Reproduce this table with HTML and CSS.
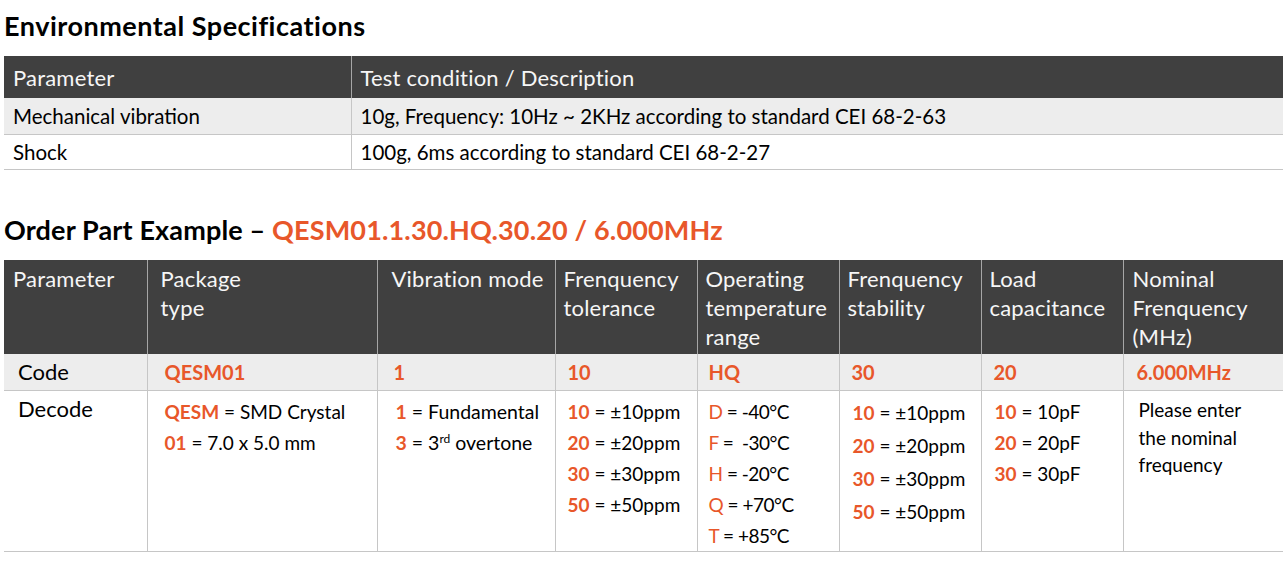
FILE: index.html
```html
<!DOCTYPE html>
<html>
<head>
<meta charset="utf-8">
<link rel="stylesheet" href="styles.css">
</head>
<body>
<div class="page">
  <h2 class="title t1">Environmental Specifications</h2>
  <table class="spec env">
    <colgroup><col class="c-env1"><col></colgroup>
    <tr class="head h-env"><th>Parameter</th><th>Test condition / Description</th></tr>
    <tr class="grey r-env1"><td>Mechanical vibration</td><td>10g, Frequency: 10Hz ~ 2KHz according to standard CEI 68-2-63</td></tr>
    <tr class="r-env2"><td>Shock</td><td>100g, 6ms according to standard CEI 68-2-27</td></tr>
  </table>

  <h2 class="title t2">Order Part Example – <span class="or">QESM01.1.30.HQ.30.20 / 6.000MHz</span></h2>
  <table class="spec order">
    <colgroup>
      <col class="w1"><col class="w2"><col class="w3"><col class="w4"><col class="w4"><col class="w4"><col class="w4"><col>
    </colgroup>
    <tr class="head h-ord">
      <th class="p9">Parameter</th>
      <th class="p13">Package<br>type</th>
      <th class="p14">Vibration mode</th>
      <th class="p8">Frenquency<br>tolerance</th>
      <th class="p8">Operating<br>temperature<br>range</th>
      <th class="p8">Frenquency<br>stability</th>
      <th class="p8">Load<br>capacitance</th>
      <th class="p9">Nominal<br>Frenquency<br>(MHz)</th>
    </tr>
    <tr class="grey code">
      <td class="lbl p14">Code</td>
      <td class="or b p17">QESM01</td>
      <td class="or b p16">1</td>
      <td class="or b p12">10</td>
      <td class="or b p11">HQ</td>
      <td class="or b p12">30</td>
      <td class="or b p12">20</td>
      <td class="or b p13">6.000MHz</td>
    </tr>
    <tr class="decode">
      <td class="lbl p14">Decode</td>
      <td class="p17"><div class="ln"><b class="or">QESM</b> = SMD Crystal</div><div class="ln"><b class="or">01</b> = 7.0 x 5.0 mm</div></td>
      <td class="p18 mid"><div class="ln"><b class="or">1</b> = Fundamental</div><div class="ln"><b class="or">3</b> = 3<sup>rd</sup> overtone</div></td>
      <td class="p12"><div class="ln"><b class="or">10</b> = ±10ppm</div><div class="ln"><b class="or">20</b> = ±20ppm</div><div class="ln"><b class="or">30</b> = ±30ppm</div><div class="ln"><b class="or">50</b> = ±50ppm</div></td>
      <td class="p11 nar"><div class="ln"><span class="or">D</span> = -40°C</div><div class="ln"><span class="or">F</span> = &nbsp;-30°C</div><div class="ln"><span class="or">H</span> = -20°C</div><div class="ln"><span class="or">Q</span> = +70°C</div><div class="ln"><span class="or">T</span> = +85°C</div></td>
      <td class="p13 wide"><div class="ln"><b class="or">10</b> = ±10ppm</div><div class="ln"><b class="or">20</b> = ±20ppm</div><div class="ln"><b class="or">30</b> = ±30ppm</div><div class="ln"><b class="or">50</b> = ±50ppm</div></td>
      <td class="p13"><div class="ln"><b class="or">10</b> = 10pF</div><div class="ln"><b class="or">20</b> = 20pF</div><div class="ln"><b class="or">30</b> = 30pF</div></td>
      <td class="p15 small"><div class="ln">Please enter</div><div class="ln">the nominal</div><div class="ln">frequency</div></td>
    </tr>
  </table>
</div>
</body>
</html>
```
FILE: styles.css
```css
html, body {
  margin: 0;
  padding: 0;
  background: #ffffff;
}
body {
  font-family: "Lato", "Liberation Sans", sans-serif;
  color: #000000;
  overflow: hidden;
}
.page {
  padding-left: 4px;
}
.title {
  margin: 0;
  font-size: 27px;
  font-weight: 700;
  letter-spacing: 0.2px;
  line-height: 30px;
}
.t1 {
  padding-top: 11px;
  height: 56px;
  box-sizing: border-box;
  letter-spacing: 0.5px;
}
.t2 {
  margin-top: 45px;
  height: 45px;
  box-sizing: border-box;
  letter-spacing: 0.15px;
}
.or {
  color: #e8572a;
}
b {
  font-weight: 700;
}
.spec {
  border-collapse: collapse;
  width: 1290px;
  table-layout: fixed;
  font-size: 20.5px;
}
.spec th, .spec td {
  padding: 0;
  text-align: left;
  font-weight: 400;
}
.spec td.b {
  font-weight: 700;
}
.head th {
  background: #404040;
  color: #f6f6f6;
  border-left: 1px solid #a6a6a6;
  letter-spacing: 0.2px;
}
.head th:first-child {
  border-left: none;
}
.spec td {
  border-left: 1px solid #c6c6c6;
  border-bottom: 1px solid #c6c6c6;
}
.spec td:first-child {
  border-left: none;
}
.grey td {
  background: #ededed;
}

/* environmental table */
.c-env1 { width: 347px; }
.env th, .env td { padding-left: 9px; vertical-align: middle; }
.h-env { height: 42px; }
.h-env th { font-size: 22px; }
.r-env1 { height: 36px; }
.r-env2 { height: 35px; }

/* order table */
.w1 { width: 143px; }
.w2 { width: 230px; }
.w3 { width: 178px; }
.w4 { width: 142px; }
.h-ord { height: 94px; }
.h-ord th {
  vertical-align: top;
  font-size: 22px;
  line-height: 29px;
  padding-top: 4px;
}
.code { height: 37px; }
.code td {
  vertical-align: middle;
  font-size: 20px;
}
.spec td.lbl {
  font-size: 22px;
  color: #000;
}
.decode { height: 161px; }
.decode td {
  vertical-align: top;
  padding-top: 5px;
  font-size: 19px;
}
.decode .ln {
  line-height: 31px;
}
.decode td.lbl {
  padding-top: 4px;
}
.decode td.mid {
  font-size: 19.5px;
}
.nar {
  letter-spacing: -0.5px;
}
.wide .ln {
  line-height: 33px;
}
.small .ln {
  line-height: 27.5px;
}
.decode td.small {
  font-size: 19px;
}
sup {
  font-size: 12px;
  vertical-align: 7px;
  line-height: 0;
}

.p8 { padding-left: 8px !important; }
.p9 { padding-left: 9px !important; }
.p11 { padding-left: 11px !important; }
.p12 { padding-left: 12px !important; }
.p13 { padding-left: 13px !important; }
.p14 { padding-left: 14px !important; }
.p15 { padding-left: 15px !important; }
.p16 { padding-left: 16px !important; }
.p17 { padding-left: 17px !important; }
.p18 { padding-left: 18px !important; }
```
